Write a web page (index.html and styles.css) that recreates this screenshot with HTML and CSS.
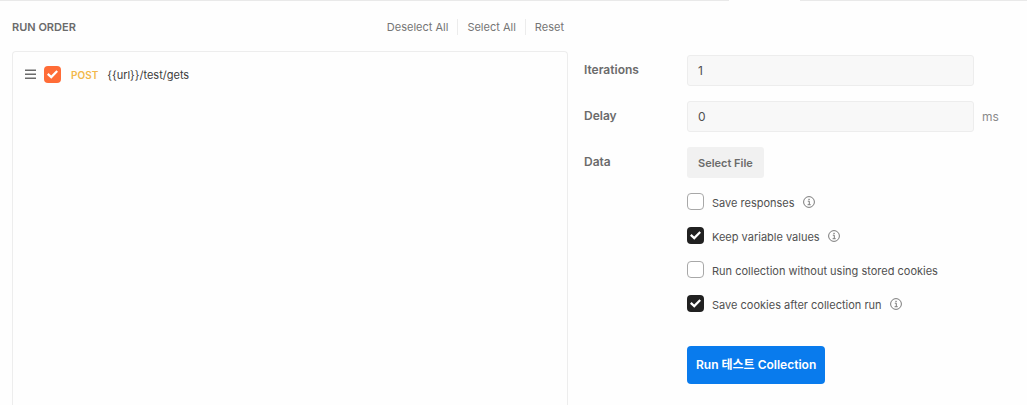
FILE: index.html
```html
<!DOCTYPE html>
<html lang="en">
<head>
<meta charset="utf-8">
<title>Collection Runner</title>
<link rel="stylesheet" href="styles.css">
</head>
<body>
<svg class="defs" aria-hidden="true">
  <symbol id="info" viewBox="0 0 12 12">
    <circle cx="6" cy="6" r="5.4" fill="none" stroke="currentColor"/>
    <path d="M4.8 5.2H6.3V8.6M4.6 8.7H7.7" fill="none" stroke="currentColor"/>
    <rect x="5.4" y="2.8" width="1.3" height="1.3" fill="currentColor"/>
  </symbol>
</svg>
<div class="tab-edge"><span class="edge edge-left"></span><span class="edge edge-right"></span></div>
<main class="runner">
  <section class="order">
    <header class="order-header">
      <h1 class="title">RUN ORDER</h1>
      <nav class="actions">
        <button class="action" type="button">Deselect All</button>
        <button class="action" type="button">Select All</button>
        <button class="action" type="button">Reset</button>
      </nav>
    </header>
    <div class="requests">
      <div class="request">
        <svg class="grip" viewBox="0 0 11 11" aria-hidden="true"><path d="M0 1.2H11M0 5.2H11M0 9.2H11" stroke="currentColor" stroke-width="1.6"/></svg>
        <input class="check accent" type="checkbox" id="req" checked>
        <label class="request-label" for="req"><span class="method">POST</span><span>{{url}}/test/gets</span></label>
      </div>
    </div>
  </section>
  <form class="settings">
    <div class="field">
      <label class="label" for="iterations">Iterations</label>
      <input class="text" id="iterations" type="text" value="1">
      <span class="unit"></span>
    </div>
    <div class="field">
      <label class="label" for="delay">Delay</label>
      <input class="text" id="delay" type="text" value="0">
      <span class="unit">ms</span>
    </div>
    <div class="field">
      <label class="label" for="file">Data</label>
      <button class="file" id="file" type="button">Select File</button>
    </div>
    <div class="options">
      <div class="option">
        <input class="check" type="checkbox" id="responses"><label for="responses">Save responses</label>
        <svg class="info"><use href="#info"/></svg>
      </div>
      <div class="option">
        <input class="check" type="checkbox" id="keep" checked><label for="keep">Keep variable values</label>
        <svg class="info"><use href="#info"/></svg>
      </div>
      <div class="option">
        <input class="check" type="checkbox" id="without"><label for="without">Run collection without using stored cookies</label>
      </div>
      <div class="option">
        <input class="check" type="checkbox" id="cookies" checked><label for="cookies">Save cookies after collection run</label>
        <svg class="info"><use href="#info"/></svg>
      </div>
      <button class="run" type="button">Run 테스트 Collection</button>
    </div>
  </form>
</main>
</body>
</html>
```

FILE: styles.css
```css
* { box-sizing: border-box; }
body {
  margin: 0;
  min-height: 100vh;
  display: flex;
  flex-direction: column;
  background: #fefefe;
  color: #505050;
  font: 11px/16px Inter, "Noto Sans CJK KR", sans-serif;
}
button, input { font: inherit; margin: 0; }
button { border: 0; cursor: pointer; }
.defs { display: none; }
.tab-edge { display: flex; justify-content: space-between; gap: 71px; height: 1px; }
.edge { background: #e9e9e9; }
.edge-left { flex: 729; }
.edge-right { flex: 227; }
.runner {
  flex: 1;
  display: grid;
  grid-template-columns: 556fr 431fr;
  gap: 16px;
  padding: 0 12px;
}
.order { display: flex; flex-direction: column; }
.order-header {
  display: flex;
  align-items: center;
  justify-content: space-between;
  height: 50px;
  padding-top: 2px;
}
.title { margin: 0; font-size: 11px; font-weight: 600; color: #6b6b6b; }
.actions { display: flex; }
.action { padding: 0 9px; background: none; color: #757575; }
.action + .action { border-left: 1px solid #ececec; }
.action:last-child { padding-right: 4px; }
.requests {
  flex: 1;
  border: 1px solid #ededed;
  border-bottom: 0;
  border-radius: 4px 4px 0 0;
  padding: 14px 12px;
}
.request { display: flex; align-items: center; gap: 8px; }
.grip { width: 11px; height: 11px; color: #6b6b6b; }
.request-label { display: flex; gap: 9px; color: #3c3c3c; padding-left: 2px; }
.method { color: #f2b84b; font-size: 10px; font-weight: 600; }
.check {
  appearance: none;
  flex: none;
  width: 17px;
  height: 17px;
  border: 1px solid #a8a8a8;
  border-radius: 4px;
  background: #fff;
}
.check:checked {
  border: 0;
  background: #212121;
  display: grid;
  place-items: center;
}
.check:checked::before {
  content: "";
  width: 11px;
  height: 9px;
  background: #fff;
  clip-path: polygon(0 52%, 14% 34%, 38% 62%, 86% 4%, 100% 20%, 39% 96%);
}
.check.accent:checked { background-color: #ff6c37; }
.settings { display: flex; flex-direction: column; gap: 15px; padding-top: 54px; }
.field { display: flex; align-items: center; height: 31px; }
.label { width: 103px; padding-bottom: 2px; color: #6b6b6b; font-size: 12px; font-weight: 600; }
.text {
  flex: 1;
  min-width: 0;
  height: 31px;
  padding: 0 10px;
  border: 1px solid #ededed;
  border-radius: 3px;
  background: #f8f8f8;
  color: #505050;
  font-size: 12px;
}
.unit { width: 41px; padding-left: 8px; color: #8a8a8a; font-size: 12px; }
.file {
  height: 31px;
  padding: 0 11px;
  border-radius: 3px;
  background: #f1f1f1;
  color: #6b6b6b;
  font-weight: 600;
}
.options {
  display: flex;
  flex-direction: column;
  align-items: flex-start;
  gap: 17px;
  padding-left: 103px;
}
.option { display: flex; align-items: center; gap: 8px; height: 17px; }
.option label { padding-top: 3px; }
.info { width: 12px; height: 12px; color: #7a7a7a; }
.run {
  height: 38px;
  margin-top: 17px;
  padding: 0 9px;
  border-radius: 4px;
  background: #097bed;
  color: #fff;
  font-size: 12px;
  font-weight: 600;
}
```
